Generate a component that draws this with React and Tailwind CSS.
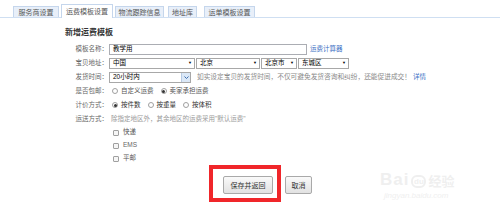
const tabs = [
  { label: '服务商设置', cls: 'ml-[13px] w-[46px] h-[11px]' },
  { label: '运费模板设置', cls: 'ml-[2px] w-[52px] h-[14px] bg-white z-10 -mb-px', active: true },
  { label: '物流跟踪信息', cls: 'ml-[2px] w-[49px] h-[11px]' },
  { label: '地址库', cls: 'ml-[4px] w-[29px] h-[11px]' },
  { label: '运单模板设置', cls: 'ml-[7px] w-[51px] h-[11px]' },
]

function Radio({ checked }) {
  return (
    <span className="w-[6px] h-[6px] rounded-full border border-[#a0a0a0] bg-white flex items-center justify-center shrink-0">
      {checked && <span className="w-[3px] h-[3px] rounded-full bg-[#333]" />}
    </span>
  )
}

function Checkbox() {
  return <span className="w-[6px] h-[6px] border border-[#a0a0a0] rounded-[1px] bg-[#f6f6f6] shrink-0" />
}

function Select({ w, text }) {
  return (
    <div className={`${w} h-[11px] border border-[#a8a8a8] bg-white flex items-center justify-between pl-[3px] pr-[2px] text-black`}>
      <span>{text}</span>
      <span className="text-[4px] leading-none">▼</span>
    </div>
  )
}

function Row({ label, children, className = 'h-[14px]' }) {
  return (
    <div className={`flex items-center ${className}`}>
      <div className="w-[44px] text-right text-[#666] pr-px">{label}</div>
      <div className="flex items-center">{children}</div>
    </div>
  )
}

export default function App() {
  return (
    <div className="relative w-[500px] h-[212px] bg-white overflow-hidden [font-family:'Liberation_Sans','Noto_Sans_CJK_SC',sans-serif] text-[6.5px] leading-none">
      {/* tabs */}
      <div className="flex items-end h-[18px] border-b border-[#cfdff2]">
        {tabs.map((t) => (
          <div
            key={t.label}
            className={`${t.cls} flex items-center justify-center border border-[#c5d6ec] text-[7px] text-[#555] ${
              t.active ? 'border-b-0' : 'bg-[#e8eff9] border-b-0'
            }`}
          >
            {t.label}
          </div>
        ))}
      </div>

      <div className="pl-[65px]">
        <div className="h-[24px] pt-[6px] flex items-center text-[8px] font-bold text-[#333]">新增运费模板</div>

        <Row label="模板名称：">
          <div className="w-[198px] h-[11px] border border-[#abadb3] flex items-center pl-[3px] text-black">教学用</div>
          <span className="ml-[3px] text-[#3a6fc4]">运费计算器</span>
        </Row>

        <Row label="宝贝地址：">
          <div className="flex gap-px">
            <Select w="w-[86px]" text="中国" />
            <Select w="w-[64px]" text="北京" />
            <Select w="w-[36px]" text="北京市" />
            <Select w="w-[51px]" text="东城区" />
          </div>
        </Row>

        <Row label="发货时间：">
          <div className="w-[82px] h-[11px] border border-[#a8a8a8] flex items-center justify-between pl-[3px] text-black">
            <span>20小时内</span>
            <span className="w-[9px] h-full bg-[#dbe8f7] border-l border-[#b7cbe4] flex items-center justify-center">
              <svg width="5" height="3" viewBox="0 0 5 3">
                <path d="M0.5 0.5 L2.5 2.5 L4.5 0.5" stroke="#3d6fb0" strokeWidth="1" fill="none" />
              </svg>
            </span>
          </div>
          <span className="ml-[6px] text-[6.7px] text-[#8a8a8a]">
            如实设定宝贝的发货时间，不仅可避免发货咨询和纠纷，还能促进成交！
          </span>
          <span className="ml-[2px] text-[#3a6fc4]">详情</span>
        </Row>

        <Row label="是否包邮：">
          <div className="flex items-center gap-[3px] pl-[3px] text-[#555]">
            <Radio />
            <span>自定义运费</span>
            <span className="w-[1px]" />
            <Radio checked />
            <span>卖家承担运费</span>
          </div>
        </Row>

        <Row label="计价方式：">
          <div className="flex items-center gap-[3px] pl-[3px] text-[#333]">
            <Radio checked />
            <span>按件数</span>
            <span className="w-[1px]" />
            <Radio />
            <span>按重量</span>
            <span className="w-[1px]" />
            <Radio />
            <span>按体积</span>
          </div>
        </Row>

        <Row label="运送方式：">
          <span className="pl-[2px] text-[#999]">除指定地区外，其余地区的运费采用"默认运费"</span>
        </Row>

        <div className="pl-[48px]">
          <div className="h-[13px] flex items-center gap-[4px]">
            <Checkbox />
            <span className="text-[#555]">快递</span>
          </div>
          <div className="h-[13px] flex items-center gap-[4px]">
            <Checkbox />
            <span className="text-[#666]">EMS</span>
          </div>
          <div className="h-[13px] flex items-center gap-[4px]">
            <Checkbox />
            <span className="text-[#555]">平邮</span>
          </div>
        </div>

        <div className="mt-[11px] ml-[158px] flex gap-[12px]">
          <button className="w-[50px] h-[18px] border border-[#a9a9a9] rounded-[2px] bg-gradient-to-b from-[#fafafa] to-[#e2e2e2] text-[7px] text-[#333]">
            保存并返回
          </button>
          <button className="w-[27px] h-[18px] border border-[#a9a9a9] rounded-[2px] bg-gradient-to-b from-[#fafafa] to-[#e2e2e2] text-[7px] text-[#333]">
            取消
          </button>
        </div>
      </div>

      {/* red annotation box */}
      <div className="absolute left-[209px] top-[165px] w-[72px] h-[37px] border-[4px] border-[#f0262a]" />

      {/* watermark */}
      <div className="absolute left-[380px] top-[171px] text-[#efefef] select-none">
        <div className="flex items-end gap-[2px]">
          <span className="text-[17px] font-bold leading-none tracking-[1px]">Bai</span>
          <span className="w-[15px] h-[13px] rounded-[6px] border-[2px] border-[#efefef] flex items-center justify-center text-[8px] font-bold">du</span>
          <span className="text-[13px] font-bold leading-none">经验</span>
        </div>
        <div className="mt-[4px] ml-[4px] text-[8px] italic">jingyan.baidu.com</div>
      </div>
    </div>
  )
}
